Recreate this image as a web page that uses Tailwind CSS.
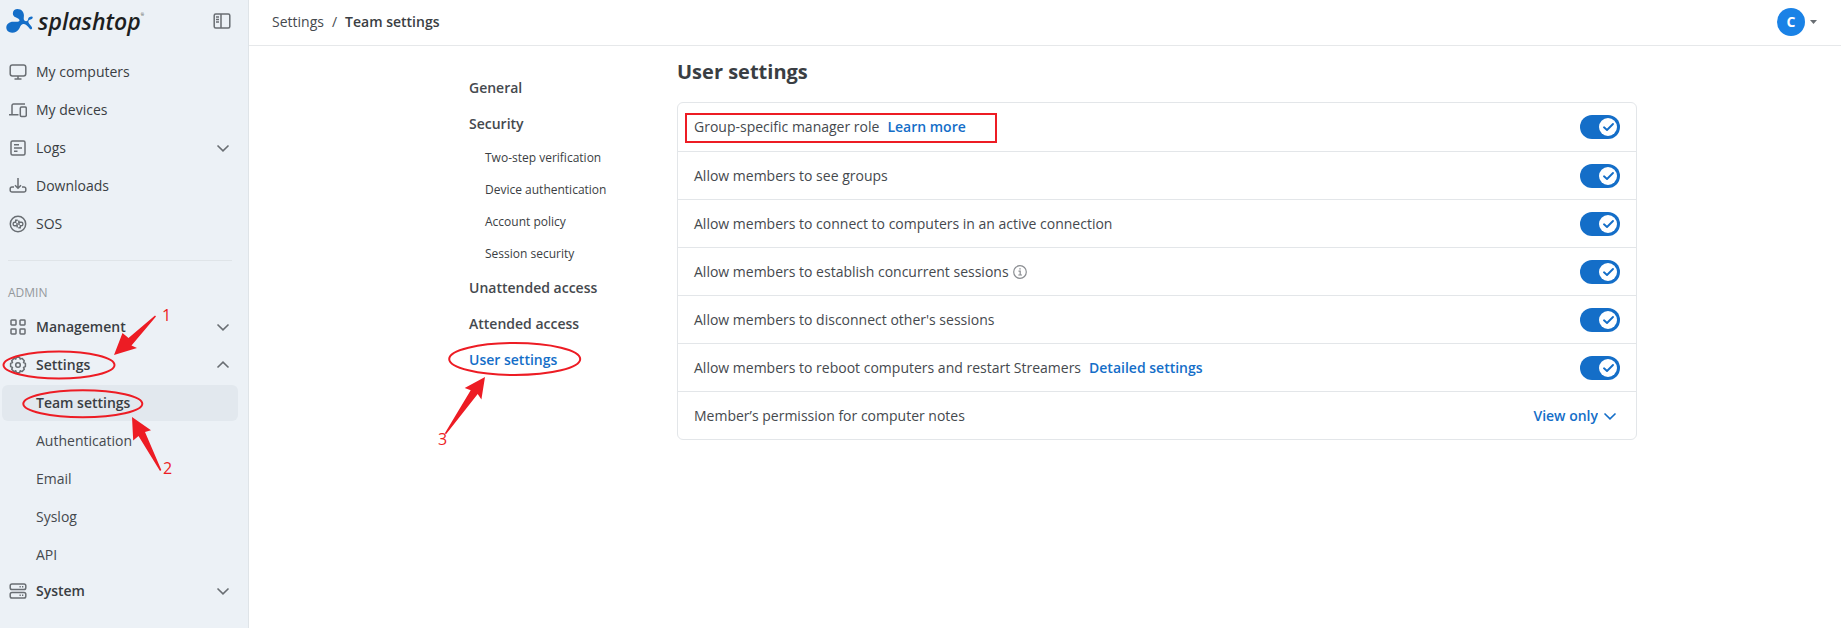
<!DOCTYPE html>
<html lang="en">
<head>
    <meta charset="UTF-8">
    <meta name="viewport" content="width=device-width, initial-scale=1.0">
    <title>Team settings - Splashtop</title>
    <script src="https://cdn.jsdelivr.net/npm/@tailwindcss/browser@4"></script>
</head>
<body class="flex min-h-screen bg-white font-['Open_Sans',sans-serif] text-sm leading-5 text-[#45494e]">

    <!-- shared icon shapes -->
    <svg class="hidden">
        <symbol id="chevron" viewBox="0 0 14 14"><path d="M1.5 4.5L7 9.8l5.5-5.3" fill="none" stroke="currentColor" stroke-width="1.6"/></symbol>
        <symbol id="check" viewBox="0 0 18 18"><path d="M5 9.3l3 2.7 6-6" fill="none" stroke="currentColor" stroke-width="1.9" stroke-linecap="round" stroke-linejoin="round"/></symbol>
    </svg>

    <!-- sidebar -->
    <aside class="relative flex w-[249px] shrink-0 flex-col border-r border-[#dfe4e8] bg-[#ecf1f6]">
        <div class="flex h-[42px] items-center justify-between pr-[17px] pl-1.5">
            <a href="#" class="flex items-center gap-1 text-[#1d1f22]">
                <svg class="h-6 w-7 text-[#146ec8]" viewBox="0 0 28 24.500" fill="currentColor">
                    <path d="M6.700 4.500C6.700 1.500 9 0 11.500 0 15.500 0 18 3 18 6.500c0 2.500-.7 4 .5 5.300 1.500 1.200 3.500.7 3.800-1.300 0-2 1.700-2.800 3.700-2.800 1 0 1.300.8.8 1.800-.8 1.500-2.800 1-3.800 2-1.200 1.500 0 3 1.500 4.800 1.500 1.700 2.500 3.200 1.500 4.200-1.500 1-2.500-.5-3.500-2-1.500-2-3.500-3.700-6-3-2 .7-2.500 3-3.500 5-1.500 2.500-4 3.800-7 3.800C2.500 24.300 0 22 0 19c0-3.500 3-6 7-6 3 0 6 .5 6.500-1 .5-1.500-2-2.500-4-3.500C7.800 7.600 6.700 6.300 6.700 4.500z"/>
                </svg>
                <span class="flex items-start"><span class="text-[23px] leading-6 font-semibold italic">splashtop</span><span class="text-[4px] leading-3">®</span></span>
            </a>
            <button type="button" aria-label="Collapse sidebar" class="text-[#696e73]">
                <svg class="h-[18px] w-[18px]" viewBox="0 0 18 18" fill="none" stroke="currentColor" stroke-width="1.5">
                    <rect x="1.2" y="2" width="15.600" height="14" rx="1.5"/>
                    <path d="M8 2v14M3 5h3M3 7.500h3M3 10h3" />
                </svg>
            </button>
        </div>

        <nav class="flex flex-col pt-[11px] text-[#3a3e43]">
            <a href="#" class="flex h-[38px] items-center gap-[9px] pl-[9px] font-medium">
                <svg class="h-[18px] w-[18px] text-[#696e73]" viewBox="0 0 18 18" fill="none" stroke="currentColor" stroke-width="1.5" stroke-linejoin="round"><rect x="1.2" y="2" width="15.6" height="11" rx="2.2"/><path d="M9 13v3M5.5 16h7"/></svg>
                My computers
            </a>
            <a href="#" class="flex h-[38px] items-center gap-[9px] pl-[9px] font-medium">
                <svg class="h-[18px] w-[18px] text-[#696e73]" viewBox="0 0 18 18" fill="none" stroke="currentColor" stroke-width="1.5" stroke-linejoin="round"><path d="M3 13V4.5A1.5 1.5 0 0 1 4.5 3H16M0 13.7h9.5"/><rect x="11.3" y="6" width="6" height="9.5" rx="1.2"/></svg>
                My devices
            </a>
            <a href="#" class="flex h-[38px] items-center gap-[9px] pr-[18px] pl-[9px] font-medium">
                <svg class="h-[18px] w-[18px] text-[#696e73]" viewBox="0 0 18 18" fill="none" stroke="currentColor" stroke-width="1.5"><rect x="2" y="2" width="14" height="14" rx="1.5"/><path d="M5 5.7h5M5 9h8M5 12.3h3.5"/></svg>
                Logs
                <svg class="ml-auto size-3.5 text-[#696e73]"><use href="#chevron"/></svg>
            </a>
            <a href="#" class="flex h-[38px] items-center gap-[9px] pl-[9px] font-medium">
                <svg class="h-[18px] w-[18px] text-[#696e73]" viewBox="0 0 18 18" fill="none" stroke="currentColor" stroke-width="1.5"><path d="M5 10H3a1.8 1.8 0 0 0-1.8 1.8v1.4A1.8 1.8 0 0 0 3 15h12a1.800 1.8 0 0 0 1.8-1.8v-1.4A1.8 1.8 0 0 0 15 10h-2M9 1v10M6 8.2l3 3 3-3"/></svg>
                Downloads
            </a>
            <a href="#" class="flex h-[38px] items-center gap-[9px] pl-[9px] font-medium">
                <svg class="h-[18px] w-[18px] text-[#696e73]" viewBox="0 0 18 18" fill="none" stroke="currentColor" stroke-width="1.5"><circle cx="9" cy="9" r="7.7"/><path d="M8.2 12.5V10.7H5.5A1.3 1.3 0 0 1 4.2 9.4V8.5A1.3 1.3 0 0 1 5.5 7.2H6.700V5.3H8.7M9.8 5.5V7.2H12.5A1.3 1.3 0 0 1 13.8 8.5V9.4A1.3 1.3 0 0 1 12.5 10.7H11.3V12.7H9.3M7 9H11" stroke-width="1.4"/></svg>
                SOS
            </a>
        </nav>

        <div class="mt-[17px] mr-4 ml-2 border-t border-[#dfe4e8]"></div>
        <h2 class="mt-[22px] mb-[5px] pl-2 text-xs leading-5 font-medium text-[#94989c]">ADMIN</h2>

        <nav class="flex flex-col text-[#3a3e43]">
            <a href="#" class="flex h-[38px] items-center gap-[9px] pr-[18px] pl-[9px] font-semibold">
                <svg class="h-[18px] w-[18px] text-[#696e73]" viewBox="0 0 18 18" fill="none" stroke="currentColor" stroke-width="1.5"><rect x="2" y="2" width="5" height="5" rx=".7"/><rect x="11" y="2" width="5" height="5" rx=".7"/><rect x="2" y="11" width="5" height="5" rx=".7"/><rect x="11" y="11" width="5" height="5" rx=".7"/></svg>
                Management
                <svg class="ml-auto size-3.5 text-[#696e73]"><use href="#chevron"/></svg>
            </a>
            <a href="#" class="flex h-[38px] items-center gap-[9px] pr-[18px] pl-[9px] font-semibold">
                <svg class="h-[18px] w-[18px] text-[#696e73]" viewBox="0 0 18 18" fill="none" stroke="currentColor" stroke-width="1.5" stroke-linejoin="round"><circle cx="9" cy="9" r="2.3"/><path d="M7.4 1.2h3.2l.6 1.9 1.8-.7 2.3 2.3-.8 1.9 1.9.8v3.2l-1.9.8.8 1.9-2.3 2.3-1.8-.8-.6 2H7.400l-.6-2-1.800.8-2.300-2.300.8-1.900-1.900-.8V7.400l1.900-.8-.8-1.900L5 2.400l1.800.7z"/></svg>
                Settings
                <svg class="ml-auto size-3.5 rotate-180 text-[#696e73]"><use href="#chevron"/></svg>
            </a>
            <a href="#" class="mt-px mr-2.5 mb-px ml-0.5 flex h-9 items-center rounded-md bg-[#e2e8ee] pl-[34px] font-semibold">Team settings</a>
            <a href="#" class="flex h-[38px] items-center pl-9 text-[#45494e]">Authentication</a>
            <a href="#" class="flex h-[38px] items-center pl-9 text-[#45494e]">Email</a>
            <a href="#" class="flex h-[38px] items-center pl-9 text-[#45494e]">Syslog</a>
            <a href="#" class="flex h-[38px] items-center pl-9 text-[#45494e]">API</a>
            <a href="#" class="flex h-[34px] items-center gap-[9px] pr-[18px] pl-[9px] font-semibold">
                <svg class="h-[18px] w-[18px] text-[#696e73]" viewBox="0 0 18 18" fill="none" stroke="currentColor" stroke-width="1.5"><rect x="1.2" y="2" width="15.6" height="5.5" rx="1.8"/><rect x="1.2" y="10.5" width="15.6" height="5.5" rx="1.8"/><path d="M10.5 4.8h1.3M13 4.8h1.3M10.5 13.3h1.3M13 13.3h1.3"/></svg>
                System
                <svg class="ml-auto size-3.5 text-[#696e73]"><use href="#chevron"/></svg>
            </a>
        </nav>

        <!-- steps 1 and 2 -->
        <svg class="pointer-events-none absolute top-[300px] left-0 h-[180px] w-[248px] text-[#ed1c24]" viewBox="0 0 248 180" fill="none" stroke="currentColor" stroke-width="2">
            <ellipse cx="59" cy="65" rx="55.5" ry="13.5"/>
            <ellipse cx="82.8" cy="103.7" rx="59.5" ry="13.5"/>
            <g fill="currentColor" stroke="none">
                <path d="M114 55l8.500-22 6 5 26.500-22.500 1 1-24.500 29 5.500 2.500z"/>
                <path d="M132 117l19 13.300-6 1.700 16.300 38-1.300 1-21.500-35-5.300 4.500z"/>
                <text x="162" y="21" font-size="16">1</text>
                <text x="163" y="174" font-size="16">2</text>
            </g>
        </svg>
    </aside>

    <div class="flex min-w-0 flex-1 flex-col">
        <header class="flex h-[46px] items-center justify-between border-b border-[#e6e8ea] pr-6 pb-px pl-[23px]">
            <div class="flex gap-2">
                <a href="#">Settings</a>
                <span>/</span>
                <span class="font-semibold text-[#3a3e43]">Team settings</span>
            </div>
            <button type="button" aria-label="Account" class="flex items-center gap-[5px]">
                <span class="flex size-7 items-center justify-center rounded-full bg-[#1a82e6] font-bold text-white">C</span>
                <svg class="h-1 w-[7px] text-[#696e73]" viewBox="0 0 7 4" fill="currentColor"><path d="M0 0h7L3.500 4z"/></svg>
            </button>
        </header>

        <main class="mx-auto flex w-full max-w-[1184px]">
            <nav class="flex w-56 shrink-0 flex-col pt-6 pl-4 font-semibold">
                <a href="#" class="flex h-9 items-center">General</a>
                <a href="#" class="flex h-9 items-center">Security</a>
                <a href="#" class="flex h-8 items-center pl-4 text-xs font-medium text-[#3a3e43]">Two-step verification</a>
                <a href="#" class="flex h-8 items-center pl-4 text-xs font-medium text-[#3a3e43]">Device authentication</a>
                <a href="#" class="flex h-8 items-center pl-4 text-xs font-medium text-[#3a3e43]">Account policy</a>
                <a href="#" class="flex h-8 items-center pl-4 text-xs font-medium text-[#3a3e43]">Session security</a>
                <a href="#" class="flex h-9 items-center">Unattended access</a>
                <a href="#" class="flex h-9 items-center">Attended access</a>
                <a href="#" class="relative flex h-9 items-center text-[#146ec8]">
                    User settings
                    <!-- step 3 -->
                    <svg class="pointer-events-none absolute top-0 -left-8 h-[110px] w-[150px] text-[#ed1c24]" viewBox="0 0 150 110" fill="none" stroke="currentColor" stroke-width="2">
                        <ellipse cx="77.700" cy="17" rx="65.500" ry="16"/>
                        <g fill="currentColor" stroke="none">
                            <path d="M48 35l-20.300 11 6 2.300-26 43.200 1.500.5 31.500-40 3.700 5.500z"/>
                            <text x="1" y="103" font-size="16" font-weight="400">3</text>
                        </g>
                    </svg>
                </a>
            </nav>

            <section class="min-w-0 flex-1 pt-3">
                <h1 class="mb-4 text-xl leading-7 font-bold text-[#3a3e43]">User settings</h1>
                <div class="rounded-md border border-[#e3e6e9]">
                    <div class="relative flex h-12 items-center justify-between px-4">
                        <div class="flex gap-2">
                            <label for="groupManager">Group-specific manager role</label>
                            <a href="#" class="font-semibold text-[#146ec8]">Learn more</a>
                        </div>
                        <div class="pointer-events-none absolute top-2.5 left-[7px] h-[30px] w-[312px] border-2 border-[#ed1c24]"></div>
                        <span class="grid items-center">
                            <input id="groupManager" type="checkbox" checked class="col-start-1 row-start-1 h-6 w-10 appearance-none rounded-full bg-[#146ec8]">
                            <svg class="pointer-events-none col-start-1 row-start-1 mr-[3px] size-[18px] justify-self-end rounded-full bg-white text-[#146ec8]"><use href="#check"/></svg>
                        </span>
                    </div>
                    <div class="flex h-12 items-center justify-between border-t border-[#e3e6e9] px-4">
                        <label for="seeGroups">Allow members to see groups</label>
                        <span class="grid items-center">
                            <input id="seeGroups" type="checkbox" checked class="col-start-1 row-start-1 h-6 w-10 appearance-none rounded-full bg-[#146ec8]">
                            <svg class="pointer-events-none col-start-1 row-start-1 mr-[3px] size-[18px] justify-self-end rounded-full bg-white text-[#146ec8]"><use href="#check"/></svg>
                        </span>
                    </div>
                    <div class="flex h-12 items-center justify-between border-t border-[#e3e6e9] px-4">
                        <label for="activeConnection">Allow members to connect to computers in an active connection</label>
                        <span class="grid items-center">
                            <input id="activeConnection" type="checkbox" checked class="col-start-1 row-start-1 h-6 w-10 appearance-none rounded-full bg-[#146ec8]">
                            <svg class="pointer-events-none col-start-1 row-start-1 mr-[3px] size-[18px] justify-self-end rounded-full bg-white text-[#146ec8]"><use href="#check"/></svg>
                        </span>
                    </div>
                    <div class="flex h-12 items-center justify-between border-t border-[#e3e6e9] px-4">
                        <div class="flex items-center gap-1">
                            <label for="concurrent">Allow members to establish concurrent sessions</label>
                            <svg class="size-3.5 text-[#8a8d91]" viewBox="0 0 14 14" fill="none" stroke="currentColor" stroke-width="1.2"><circle cx="7" cy="7" r="6.3"/><path d="M5.5 6.2H7.2V10M5.3 10H9M6.3 3.8H7.7"/></svg>
                        </div>
                        <span class="grid items-center">
                            <input id="concurrent" type="checkbox" checked class="col-start-1 row-start-1 h-6 w-10 appearance-none rounded-full bg-[#146ec8]">
                            <svg class="pointer-events-none col-start-1 row-start-1 mr-[3px] size-[18px] justify-self-end rounded-full bg-white text-[#146ec8]"><use href="#check"/></svg>
                        </span>
                    </div>
                    <div class="flex h-12 items-center justify-between border-t border-[#e3e6e9] px-4">
                        <label for="disconnect">Allow members to disconnect other's sessions</label>
                        <span class="grid items-center">
                            <input id="disconnect" type="checkbox" checked class="col-start-1 row-start-1 h-6 w-10 appearance-none rounded-full bg-[#146ec8]">
                            <svg class="pointer-events-none col-start-1 row-start-1 mr-[3px] size-[18px] justify-self-end rounded-full bg-white text-[#146ec8]"><use href="#check"/></svg>
                        </span>
                    </div>
                    <div class="flex h-12 items-center justify-between border-t border-[#e3e6e9] px-4">
                        <div class="flex gap-2">
                            <label for="reboot">Allow members to reboot computers and restart Streamers</label>
                            <a href="#" class="font-semibold text-[#146ec8]">Detailed settings</a>
                        </div>
                        <span class="grid items-center">
                            <input id="reboot" type="checkbox" checked class="col-start-1 row-start-1 h-6 w-10 appearance-none rounded-full bg-[#146ec8]">
                            <svg class="pointer-events-none col-start-1 row-start-1 mr-[3px] size-[18px] justify-self-end rounded-full bg-white text-[#146ec8]"><use href="#check"/></svg>
                        </span>
                    </div>
                    <div class="flex h-12 items-center justify-between border-t border-[#e3e6e9] px-4">
                        <label for="notes">Member’s permission for computer notes</label>
                        <span class="grid items-center text-[#146ec8]">
                            <select id="notes" class="col-start-1 row-start-1 field-sizing-content appearance-none bg-transparent pr-[22px] font-semibold">
                                <option>View only</option>
                            </select>
                            <svg class="pointer-events-none col-start-1 row-start-1 mr-[3px] size-3.5 justify-self-end"><use href="#chevron"/></svg>
                        </span>
                    </div>
                </div>
            </section>
        </main>
    </div>

</body>
</html>
